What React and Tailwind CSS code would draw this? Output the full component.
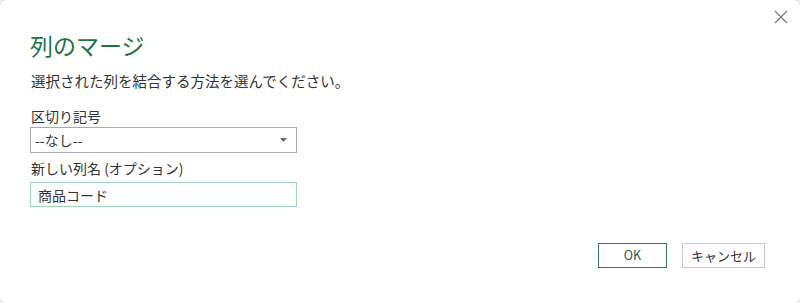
export default function App() {
  return (
    <div className="w-[800px] h-[303px] bg-[#e9e9e9]">
      <div
        className="w-full h-full bg-white rounded-[7px] flex flex-col text-[#333333]"
        style={{ fontFamily: '"Noto Sans CJK JP", "Noto Sans", sans-serif' }}
      >
        <div className="flex justify-between items-start">
          <div className="pt-[29px] pl-[30px] text-[23px] leading-[32px] text-[#217346]">列のマージ</div>
          <button className="mt-[9px] mr-[11px] w-[16px] h-[16px] flex items-center justify-center">
            <svg width="14" height="14" viewBox="0 0 14 14">
              <path d="M1 1 L13 13 M13 1 L1 13" stroke="#7a7a7a" strokeWidth="1.2" fill="none" />
            </svg>
          </button>
        </div>
        <div className="pl-[31px] mt-[10px] text-[14.5px] leading-[20px]">選択された列を結合する方法を選んでください。</div>
        <div className="pl-[31px] mt-[15px] text-[14px] leading-[20px]">区切り記号</div>
        <div className="ml-[30px] mt-[1px] w-[267px] h-[26px] border border-[#ababab] flex items-center justify-between pl-[4px] pr-[9px] text-[14px]">
          <span className="leading-[20px]">--なし--</span>
          <svg width="7" height="4" viewBox="0 0 7 4">
            <path d="M0 0 L7 0 L3.5 4 Z" fill="#6a6a6a" />
          </svg>
        </div>
        <div className="pl-[31px] mt-[5px] text-[14px] leading-[20px]">新しい列名 (オプション)</div>
        <div className="ml-[30px] mt-[4px] w-[267px] h-[25px] border border-[#9ed6b8] flex items-center pl-[7px] text-[14px]">
          <span className="leading-[20px]">商品コード</span>
        </div>
        <div className="flex justify-end gap-[15px] mt-[36px] pr-[35px]">
          <button className="w-[69px] h-[25px] border border-[#2f7d55] text-[12.5px] text-[#2b5a44] bg-white flex items-center justify-center">
            OK
          </button>
          <button className="w-[83px] h-[25px] border border-[#c8c8c8] text-[13px] text-[#333333] bg-white flex items-center justify-center">
            キャンセル
          </button>
        </div>
      </div>
    </div>
  )
}
